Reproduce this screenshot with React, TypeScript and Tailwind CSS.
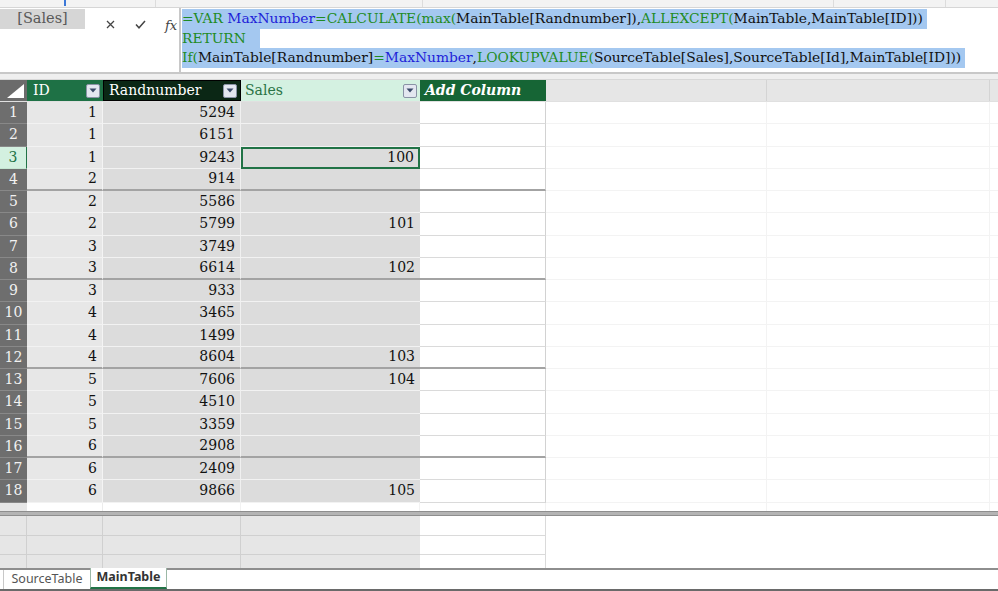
import React from 'react';

const G = 'text-[#1f8b24]';
const B = 'text-[#1e22d8]';
const K = 'text-[#111]';

type Seg = [string, string];

const formula: { segs: Seg[]; extra: string }[] = [
  {
    segs: [
      ['=VAR ', G],
      ['MaxNumber', B],
      ['=CALCULATE(', G],
      ['max(', G],
      ['MainTable[Randnumber]),', K],
      ['ALLEXCEPT(', G],
      ['MainTable,MainTable[ID]))', K],
    ],
    extra: 'pr-[4px]',
  },
  { segs: [['RETURN', G]], extra: 'pr-[14px]' },
  {
    segs: [
      ['If(', G],
      ['MainTable[Randnumber]', K],
      ['=', G],
      ['MaxNumber', B],
      [',', K],
      ['LOOKUPVALUE(', G],
      ['SourceTable[Sales],SourceTable[Id],MainTable[ID]))', K],
    ],
    extra: 'pr-[4px]',
  },
];

const rows: [number, number, string][] = [
  [1, 5294, ''],
  [1, 6151, ''],
  [1, 9243, '100'],
  [2, 914, ''],
  [2, 5586, ''],
  [2, 5799, '101'],
  [3, 3749, ''],
  [3, 6614, '102'],
  [3, 933, ''],
  [4, 3465, ''],
  [4, 1499, ''],
  [4, 8604, '103'],
  [5, 7606, '104'],
  [5, 4510, ''],
  [5, 3359, ''],
  [6, 2908, ''],
  [6, 2409, ''],
  [6, 9866, '105'],
];

function Dropdown() {
  return (
    <div className="ml-auto mr-[3px] flex h-[14px] w-[14px] items-center justify-center rounded-[2px] border border-[#8a93a6] bg-[#e3e7f0]">
      <svg width="8" height="5" viewBox="0 0 8 5">
        <path d="M0.5 0.5 L7.5 0.5 L4 4.5 Z" fill="#3a4a68" />
      </svg>
    </div>
  );
}

function DataRow({ n, id, rand, sales }: { n: number; id: number; rand: number; sales: string }) {
  const selected = n === 3;
  const group = n % 4 === 0 && n < 18;
  const groupLine = group ? 'border-b-2 border-b-[#a3a3a3]' : 'border-b border-b-[#f2f2f2]';
  return (
    <div className="flex h-[22.25px]">
      <div
        className={
          selected
            ? 'flex w-[27px] shrink-0 items-center justify-center border-b border-r border-b-[#c5e6d2] border-r-[#217346] bg-[#d3f0e0] text-[#217346]'
            : 'flex w-[27px] shrink-0 items-center justify-center border-b border-b-[#888] bg-[#6e6e6e] text-[#f2f2f2]'
        }
      >
        {n}
      </div>
      <div className={`flex w-[76px] shrink-0 items-center justify-end border-r border-r-[#f4f4f4] bg-[#e7e7e7] pr-[5px] ${groupLine}`}>
        {id}
      </div>
      <div className={`flex w-[138px] shrink-0 items-center justify-end border-r border-r-[#f0f0f0] bg-[#dcdcdc] pr-[5px] ${groupLine}`}>
        {rand}
      </div>
      <div
        className={
          selected
            ? 'flex w-[179px] shrink-0 items-center justify-end border-2 border-[#217346] bg-[#dcdcdc] pr-[4px]'
            : `flex w-[179px] shrink-0 items-center justify-end bg-[#dcdcdc] pr-[5px] ${groupLine}`
        }
      >
        {sales}
      </div>
      <div className={`w-[126px] shrink-0 border-r border-r-[#d2d2d2] bg-white ${group ? 'border-b-2 border-b-[#a3a3a3]' : 'border-b border-b-[#dadada]'}`} />
      <div className="w-[221px] shrink-0 border-b border-r border-[#f3f3f3]" />
      <div className="w-[223px] shrink-0 border-b border-r border-[#f3f3f3]" />
      <div className="flex-1 border-b border-[#f3f3f3]" />
    </div>
  );
}

export default function App() {
  return (
    <div
      className="flex h-[591px] w-[998px] flex-col overflow-hidden bg-white text-[14px] text-[#111]"
      style={{ fontFamily: '"DejaVu Serif", "Liberation Serif", serif' }}
    >
      {/* top ribbon remnant */}
      <div className="flex h-[8px] shrink-0 border-b border-[#d6d6d6] bg-[#f3f3f3]">
        <div className="ml-[64px] h-[6px] w-[2px] bg-[#3c78d8]" />
        <div className="ml-[89px] h-full w-px bg-[#dcdcdc]" />
        <div className="ml-[266px] h-full w-px bg-[#dcdcdc]" />
        <div className="ml-[410px] h-full w-px bg-[#dcdcdc]" />
        <div className="ml-[111px] h-full w-px bg-[#dcdcdc]" />
      </div>

      {/* formula bar */}
      <div className="flex h-[66px] shrink-0 border-b-2 border-[#c8c8c8]">
        <div className="w-[85px] shrink-0">
          <div className="mt-[1px] flex h-[20px] items-center justify-center bg-[#d6d6d6] text-[14.5px] text-[#595959]">
            [Sales]
          </div>
        </div>
        <div className="flex w-[96px] shrink-0 items-start border-r-2 border-[#c8c8c8] pt-[12px]">
          <svg className="ml-[21px]" width="9" height="9" viewBox="0 0 9 9">
            <path d="M1 1 L8 8 M8 1 L1 8" stroke="#444" strokeWidth="1.3" />
          </svg>
          <svg className="ml-[20px]" width="11" height="9" viewBox="0 0 11 9">
            <path d="M1 4.5 L4 7.8 L10 1" stroke="#444" strokeWidth="1.5" fill="none" />
          </svg>
          <span className="-mt-[4px] ml-[19px] text-[13px] italic text-[#444]">fx</span>
        </div>
        <div className="flex flex-col pl-[1px] pt-[1px] text-[13.8px]">
          {formula.map((line, i) => (
            <div key={i} className="flex h-[19.5px]">
              <span className={`inline-flex h-full items-center whitespace-pre bg-[#a4c8f0] ${line.extra}`}>
                {line.segs.map(([t, c], j) => (
                  <span key={j} className={c}>
                    {t}
                  </span>
                ))}
              </span>
            </div>
          ))}
        </div>
      </div>

      <div className="h-[6px] shrink-0 border-b border-[#d8d8d8] bg-[#efefef]" />

      {/* header row */}
      <div className="flex h-[22px] shrink-0 border-b border-[#e0e0e0]">
        <div className="flex w-[27px] shrink-0 items-end justify-end bg-[#6b6b6b] pb-[3px] pr-[3px]">
          <svg width="17" height="14" viewBox="0 0 17 14">
            <path d="M0 14 L17 14 L17 0 Z" fill="#fff" />
          </svg>
        </div>
        <div className="flex w-[76px] shrink-0 items-center bg-[#1e7145] pl-[6px] text-white">
          ID
          <Dropdown />
        </div>
        <div className="flex w-[138px] shrink-0 items-center border border-black bg-[#0b2715] pl-[5px] text-white">
          Randnumber
          <Dropdown />
        </div>
        <div className="flex w-[179px] shrink-0 items-center bg-[#d4f1e1] pl-[4px] text-[#2a7446]">
          Sales
          <Dropdown />
        </div>
        <div className="flex w-[126px] shrink-0 items-center bg-[#166535] pl-[5px] font-bold italic text-white">
          Add Column
        </div>
        <div className="w-[221px] shrink-0 border-r border-[#d4d4d4] bg-[#e6e6e6]" />
        <div className="w-[223px] shrink-0 border-r border-[#d4d4d4] bg-[#e6e6e6]" />
        <div className="flex-1 bg-[#e6e6e6]" />
      </div>

      {/* data rows */}
      {rows.map(([id, rand, sales], i) => (
        <DataRow key={i} n={i + 1} id={id} rand={rand} sales={sales} />
      ))}

      {/* empty remainder row */}
      <div className="flex h-[8.5px] shrink-0">
        <div className="w-[27px] shrink-0 bg-[#e6e6e6]" />
        <div className="w-[76px] shrink-0 border-r border-[#ececec]" />
        <div className="w-[138px] shrink-0 border-r border-[#f2f2f2]" />
        <div className="w-[179px] shrink-0 border-r border-[#f2f2f2]" />
        <div className="w-[126px] shrink-0 border-r border-[#f2f2f2]" />
        <div className="w-[221px] shrink-0 border-r border-[#f3f3f3]" />
        <div className="w-[223px] shrink-0 border-r border-[#f3f3f3]" />
      </div>

      {/* split bar */}
      <div className="h-[5px] shrink-0 border-y border-[#8e8e8e] bg-[#b4b4b4]" />

      {/* lower pane */}
      <div className="flex min-h-0 flex-1 flex-col">
        {[20, 19, 13].map((h, i) => (
          <div key={i} className="flex" style={{ height: h }}>
            <div className={`w-[27px] shrink-0 border-r border-[#d0d0d0] bg-[#e6e6e6] ${i < 2 ? 'border-b' : ''}`} />
            <div className={`w-[76px] shrink-0 border-r border-[#d0d0d0] bg-[#e6e6e6] ${i < 2 ? 'border-b' : ''}`} />
            <div className={`w-[138px] shrink-0 border-r border-[#d0d0d0] bg-[#e6e6e6] ${i < 2 ? 'border-b' : ''}`} />
            <div className={`w-[179px] shrink-0 border-[#d0d0d0] bg-[#e6e6e6] ${i < 2 ? 'border-b' : ''}`} />
            <div className={`w-[126px] shrink-0 border-r border-[#dadada] bg-white ${i < 2 ? 'border-b' : ''}`} />
            <div className="flex-1" />
          </div>
        ))}
      </div>

      {/* sheet tabs */}
      <div
        className="flex h-[23px] shrink-0 border-y-2 border-t-[#8e8e8e] border-b-[#6a6a6a] bg-white text-[12.5px]"
        style={{ fontFamily: '"Noto Sans", "Open Sans", sans-serif' }}
      >
        <div className="ml-[3px] flex w-[87px] items-center justify-center border-l border-[#c8c8c8] text-[#555]">
          SourceTable
        </div>
        <div className="-mt-[2px] flex w-[77px] items-center justify-center border-x border-b-2 border-x-[#9bb8a6] border-b-[#217346] bg-white font-bold text-[#333]">
          MainTable
        </div>
      </div>
    </div>
  );
}
